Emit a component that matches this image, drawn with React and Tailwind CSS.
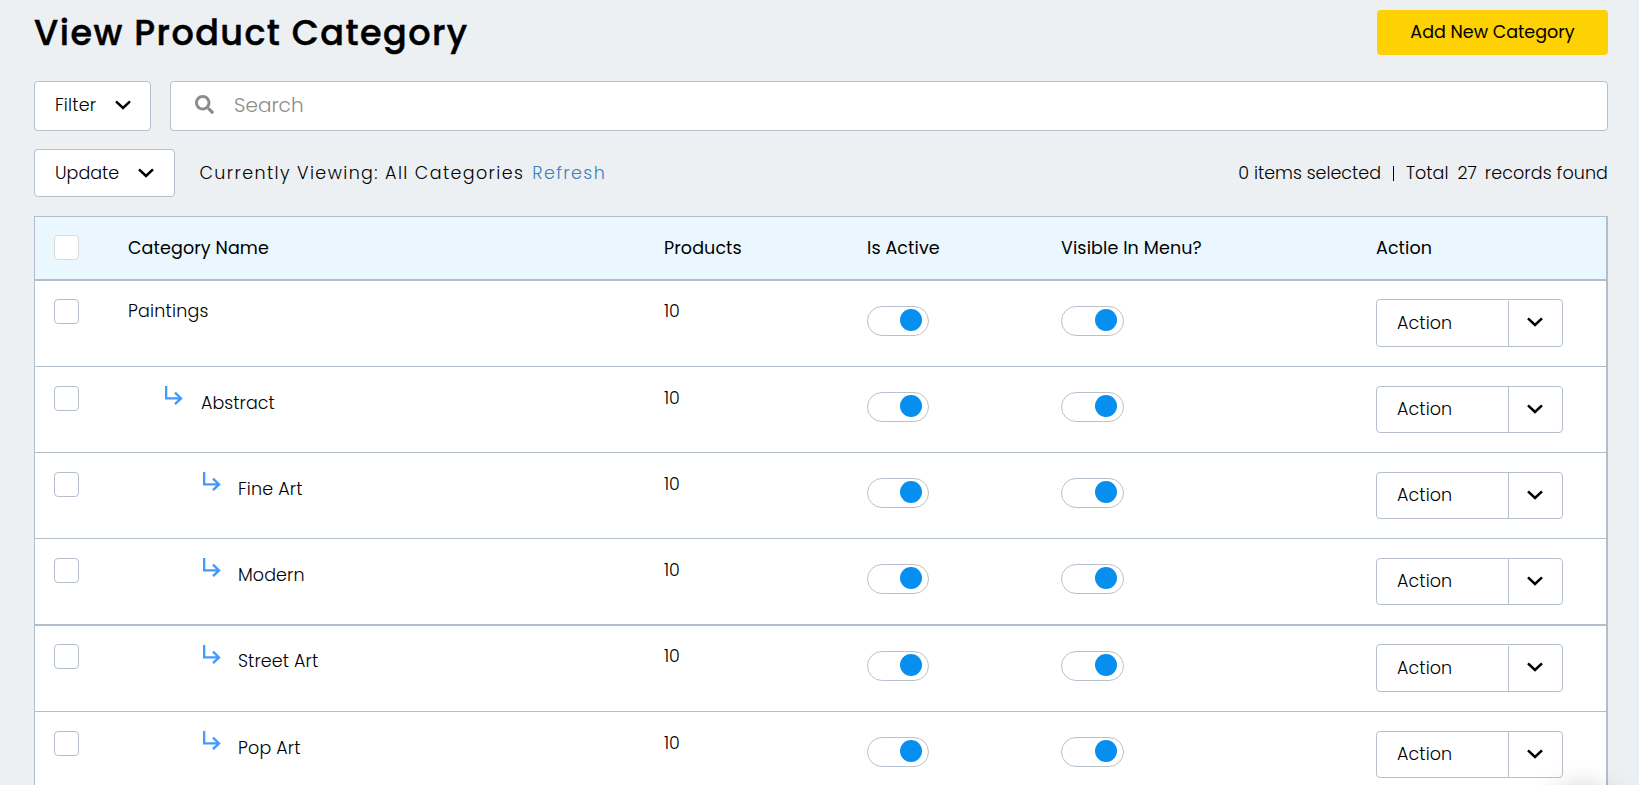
import React from "react";
import { FaSearch } from "react-icons/fa";

const GRID = "grid grid-cols-[93px_536px_203px_194px_315px_1fr]";

const rows = [
  { name: "Paintings", level: 0, tracking: "tracking-[0.2px]", tall: true },
  { name: "Abstract", level: 1, tracking: "tracking-[0.05px]" },
  { name: "Fine Art", level: 2, tracking: "tracking-[0.15px]" },
  { name: "Modern", level: 2, tracking: "tracking-[0.1px]", thick: true },
  { name: "Street Art", level: 2, tracking: "tracking-[0.1px]", tall: true },
  { name: "Pop Art", level: 2, tracking: "tracking-[0.15px]" },
];

function Chevron() {
  return (
    <svg width="16" height="10" viewBox="0 0 16 10" fill="none" className="shrink-0">
      <path d="M1 1.3 8 8l7-6.7" stroke="#000" strokeWidth="2.5" />
    </svg>
  );
}

function ChildArrow() {
  return (
    <svg width="19" height="20" viewBox="0 0 19 20" fill="none" className="shrink-0">
      <path d="M1.1 0v12.4h15.2M10 6.6l6 5.8-6 5.8" stroke="#419aff" strokeWidth="2.4" />
    </svg>
  );
}

function Checkbox({ className }) {
  return <div className={"h-[25px] w-[25px] rounded border bg-white " + className} />;
}

function Toggle({ className }) {
  return (
    <div className={"mt-[25px] flex h-[30px] justify-end rounded-full border border-[#b8c2cf] bg-white pt-0.5 " + className}>
      <div className="h-[22px] w-[22px] rounded-full bg-[#078fef]" />
    </div>
  );
}

function ActionButton({ tall }) {
  return (
    <div className={"flex w-[187px] rounded border border-[#b5c0cc] bg-white " + (tall ? "mt-[18px] h-12" : "mt-[19px] h-[47px]")}>
      <div className="flex w-[131px] items-center pl-5 tracking-[0.1px]">Action</div>
      <div className={"flex flex-1 items-center justify-center border-l border-[#b5c0cc] pr-0.5 " + (tall ? "mt-px pb-1" : "pb-0.5")}>
        <Chevron />
      </div>
    </div>
  );
}

function NameCell({ row }) {
  if (row.level === 0) {
    return <div className={"pt-[18px] leading-6 " + row.tracking}>{row.name}</div>;
  }
  return (
    <div className={"flex " + (row.level === 1 ? "pl-[37px]" : "pl-[75px]")}>
      <div className={"pt-[19px] " + (row.level === 1 ? "w-9" : "w-[35px]")}>
        <ChildArrow />
      </div>
      <div className={"leading-6 " + (row.tall ? "pt-[23px] " : "pt-6 ") + row.tracking}>{row.name}</div>
    </div>
  );
}

function Row({ row }) {
  return (
    <div className={GRID + " box-content h-[85px] border-[#b3becb] " + (row.thick ? "border-b-2" : "border-b")}>
      <Checkbox className={"ml-[19px] border-[#b5c0cc] " + (row.tall ? "mt-[18px]" : "mt-[19px]")} />
      <NameCell row={row} />
      <div className={"leading-6 " + (row.tall ? "pt-[18px]" : "pt-[19px]")}>10</div>
      <div>
        <Toggle className="w-[62px] pr-1.5" />
      </div>
      <div>
        <Toggle className="w-[63px] pr-1.5" />
      </div>
      <ActionButton tall={row.tall} />
    </div>
  );
}

export default function App() {
  return (
    <div className="relative h-[785px] overflow-hidden bg-[#ecf0f3] pr-[31px] pl-[34px] font-['Poppins','Inter',sans-serif] text-[17.5px] font-light text-black">
      <header className="flex h-[81px] items-start justify-between pt-2.5">
        <h1 className="text-[35px] leading-[46px] font-medium tracking-[1.43px] [-webkit-text-stroke:0.5px_#000]">View Product Category</h1>
        <button className="h-[45px] w-[231px] rounded bg-[#fdd102] font-normal">Add New Category</button>
      </header>

      <div className="flex h-[50px] gap-[19px]">
        <button className="flex w-[117px] items-center gap-[19px] rounded border border-[#b5c0cc] bg-white pb-0.5 pl-5 tracking-[0.2px]">
          Filter
          <Chevron />
        </button>
        <div className="flex flex-1 items-center rounded border border-[#b5c0cc] bg-white pb-0.5 pl-6 text-xl text-[#8c8c8c]">
          <FaSearch className="mr-5 h-[19px] w-[19px] -translate-y-px" />
          Search
        </div>
      </div>

      <div className="mt-[18px] flex h-12 items-center">
        <button className="flex h-12 w-[141px] items-center gap-[19px] rounded border border-[#b5c0cc] bg-white pl-5">
          Update
          <Chevron />
        </button>
        <div className="ml-[24.5px] tracking-[1.38px]">Currently Viewing: All Categories</div>
        <a className="ml-2 tracking-[1.4px] text-[#4080bb]">Refresh</a>
        <div className="ml-auto flex">
          <span>0 items selected</span>
          <span className="mt-px ml-3 h-[15px] w-px self-center bg-black" />
          <span className="ml-3">Total</span>
          <span className="ml-[9px]">27</span>
          <span className="ml-2 tracking-[0.1px]">records found</span>
        </div>
      </div>

      <div className="mt-[19px] border border-r-2 border-[#b3becb] bg-white">
        <div className={GRID + " h-16 items-center border-b-2 border-[#b3becb] bg-[#eaf7fe] font-normal"}>
          <Checkbox className="-mt-px ml-[19px] border-[#d9d9d9]" />
          <div className="tracking-[0.1px]">Category Name</div>
          <div className="tracking-[0.1px]">Products</div>
          <div className="tracking-[0.1px]">Is Active</div>
          <div className="tracking-[0.12px]">Visible In Menu?</div>
          <div className="tracking-[0.1px]">Action</div>
        </div>
        {rows.map((row) => (
          <Row key={row.name} row={row} />
        ))}
      </div>

      <div className="absolute top-[793px] left-[1553px] h-[60px] w-[60px] rounded-full shadow-[0_0_32px_rgba(0,0,0,0.35)]" />
    </div>
  );
}
